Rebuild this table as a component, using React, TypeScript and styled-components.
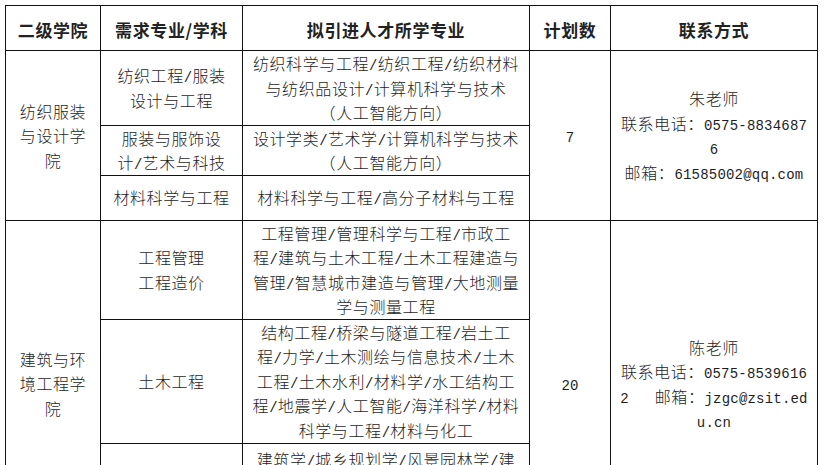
import React from 'react';
import styled, { createGlobalStyle } from 'styled-components';

const GlobalStyle = createGlobalStyle`
  html, body {
    margin: 0;
    padding: 0;
    background: #fff;
  }
  body {
    font-family: "Noto Sans CJK SC", "Noto Sans", sans-serif;
    color: #1e1e1e;
  }
`;

const Page = styled.div`
  padding: 5px 0 0 5px;
`;

const Table = styled.table`
  border-collapse: collapse;
  table-layout: fixed;
  width: 812px;
`;

const Row = styled.tr<{ $h: number }>`
  height: ${(p) => p.$h}px;
`;

const HeadCell = styled.th`
  padding: 3px 0 0;
  border: 1px solid #111;
  font-size: 17px;
  font-weight: 700;
  letter-spacing: 0.6px;
  text-align: center;
  vertical-align: middle;
  color: #222;
`;

const Cell = styled.td`
  padding: 0;
  border: 1px solid #111;
  font-size: 16px;
  font-weight: 300;
  letter-spacing: 0.6px;
  text-align: center;
  vertical-align: middle;
`;

const TopCell = styled(Cell)`
  vertical-align: top;
  padding-top: 3px;
`;

const Line = styled.span`
  display: block;
  height: 24.5px;
  line-height: 24.5px;
  white-space: pre;
`;

const Latin = styled.span`
  font-family: "Liberation Mono", monospace;
  font-size: 14px;
  line-height: 1;
  letter-spacing: 0.2px;
`;

const Text = ({ children }: { children: string }) => (
  <>
    {children.split(/([\x20-\x7e]+)/).map((part, i) =>
      /^[\x20-\x7e]+$/.test(part) ? <Latin key={i}>{part}</Latin> : part
    )}
  </>
);

const Lines = ({ items }: { items: string[] }) => (
  <>
    {items.map((t, i) => (
      <Line key={i}>
        <Text>{t}</Text>
      </Line>
    ))}
  </>
);

interface Sub {
  major: string[];
  fields: string[];
  h: number;
  top?: boolean;
}

interface Group {
  college: string[];
  plan: string;
  contact: string[];
  subs: Sub[];
}

const groups: Group[] = [
  {
    college: ['纺织服装', '与设计学', '院'],
    plan: '7',
    contact: ['朱老师', '联系电话：0575-8834687', '6', '邮箱：61585002@qq.com'],
    subs: [
      {
        major: ['纺织工程/服装', '设计与工程'],
        fields: ['纺织科学与工程/纺织工程/纺织材料', '与纺织品设计/计算机科学与技术', '（人工智能方向）'],
        h: 74,
      },
      {
        major: ['服装与服饰设', '计/艺术与科技'],
        fields: ['设计学类/艺术学/计算机科学与技术', '（人工智能方向）'],
        h: 48,
      },
      {
        major: ['材料科学与工程'],
        fields: ['材料科学与工程/高分子材料与工程'],
        h: 45,
      },
    ],
  },
  {
    college: ['建筑与环', '境工程学', '院'],
    plan: '20',
    contact: ['陈老师', '联系电话：0575-8539616', '2   邮箱：jzgc@zsit.ed', 'u.cn'],
    subs: [
      {
        major: ['工程管理', '工程造价'],
        fields: [
          '工程管理/管理科学与工程/市政工',
          '程/建筑与土木工程/土木工程建造与',
          '管理/智慧城市建造与管理/大地测量',
          '学与测量工程',
        ],
        h: 97,
      },
      {
        major: ['土木工程'],
        fields: [
          '结构工程/桥梁与隧道工程/岩土工',
          '程/力学/土木测绘与信息技术/土木',
          '工程/土木水利/材料学/水工结构工',
          '程/地震学/人工智能/海洋科学/材料',
          '科学与工程/材料与化工',
        ],
        h: 124,
      },
      {
        major: ['建筑学', '城乡规划'],
        fields: [
          '建筑学/城乡规划学/风景园林学/建',
          '筑环境与能源应用工程/给排水科学',
          '与工程/环境工程/环境科学与工程',
          '（人工智能方向）',
        ],
        h: 104,
        top: true,
      },
    ],
  },
];

export default function App() {
  return (
    <Page>
      <GlobalStyle />
      <Table>
        <colgroup>
          <col style={{ width: 95 }} />
          <col style={{ width: 142 }} />
          <col style={{ width: 287 }} />
          <col style={{ width: 81 }} />
          <col style={{ width: 207 }} />
        </colgroup>
        <thead>
          <Row $h={45}>
            <HeadCell>二级学院</HeadCell>
            <HeadCell>需求专业/学科</HeadCell>
            <HeadCell>拟引进人才所学专业</HeadCell>
            <HeadCell>计划数</HeadCell>
            <HeadCell>联系方式</HeadCell>
          </Row>
        </thead>
        <tbody>
          {groups.map((g, gi) =>
            g.subs.map((s, si) => {
              const FieldCell = s.top ? TopCell : Cell;
              return (
                <Row $h={s.h} key={`${gi}-${si}`}>
                  {si === 0 && (
                    <Cell rowSpan={g.subs.length}>
                      <Lines items={g.college} />
                    </Cell>
                  )}
                  <Cell>
                    <Lines items={s.major} />
                  </Cell>
                  <FieldCell>
                    <Lines items={s.fields} />
                  </FieldCell>
                  {si === 0 && (
                    <Cell rowSpan={g.subs.length}>
                      <Lines items={[g.plan]} />
                    </Cell>
                  )}
                  {si === 0 && (
                    <Cell rowSpan={g.subs.length}>
                      <Lines items={g.contact} />
                    </Cell>
                  )}
                </Row>
              );
            })
          )}
        </tbody>
      </Table>
    </Page>
  );
}
